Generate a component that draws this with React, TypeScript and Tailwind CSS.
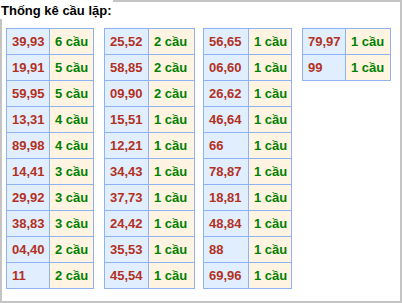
import React from "react";

type Row = [string, string];

const tables: { rows: Row[]; w1: string; w2: string; ml: string }[] = [
  {
    rows: [
      ["39,93", "6 cầu"],
      ["19,91", "5 cầu"],
      ["59,95", "5 cầu"],
      ["13,31", "4 cầu"],
      ["89,98", "4 cầu"],
      ["14,41", "3 cầu"],
      ["29,92", "3 cầu"],
      ["38,83", "3 cầu"],
      ["04,40", "2 cầu"],
      ["11", "2 cầu"],
    ],
    w1: "w-[43px]",
    w2: "w-[44px]",
    ml: "ml-0",
  },
  {
    rows: [
      ["25,52", "2 cầu"],
      ["58,85", "2 cầu"],
      ["09,90", "2 cầu"],
      ["15,51", "1 cầu"],
      ["12,21", "1 cầu"],
      ["34,43", "1 cầu"],
      ["37,73", "1 cầu"],
      ["24,42", "1 cầu"],
      ["35,53", "1 cầu"],
      ["45,54", "1 cầu"],
    ],
    w1: "w-[44px]",
    w2: "w-[46px]",
    ml: "ml-[10px]",
  },
  {
    rows: [
      ["56,65", "1 cầu"],
      ["06,60", "1 cầu"],
      ["26,62", "1 cầu"],
      ["46,64", "1 cầu"],
      ["66", "1 cầu"],
      ["78,87", "1 cầu"],
      ["18,81", "1 cầu"],
      ["48,84", "1 cầu"],
      ["88", "1 cầu"],
      ["69,96", "1 cầu"],
    ],
    w1: "w-[45px]",
    w2: "w-[43px]",
    ml: "ml-[8px]",
  },
  {
    rows: [
      ["79,97", "1 cầu"],
      ["99", "1 cầu"],
    ],
    w1: "w-[43px]",
    w2: "w-[45px]",
    ml: "ml-[10px]",
  },
];

export default function App() {
  return (
    <div
      className="relative w-[402px] h-[303px] border-2 border-[#c4c4c4] bg-white text-[13px] font-bold"
      style={{ fontFamily: '"Liberation Sans", Arial, sans-serif' }}
    >
      <div className="absolute -left-[2px] -top-[2px] w-[113px] h-[19px] bg-white pl-[1px] pt-[3px] leading-[15px] text-black">
        Thống kê cầu lặp:
      </div>
      <div className="flex items-start pt-[26px] pl-[4px]">
        {tables.map((t, i) => (
          <div
            key={i}
            className={`flex flex-col border-l border-t border-[#8fb2f2] ${t.ml}`}
          >
            {t.rows.map(([a, b], j) => (
              <div key={j} className="flex">
                <div
                  className={`${t.w1} h-[26px] border-r border-b border-[#8fb2f2] bg-[#e1eefe] text-[#b3311e] pl-[5px] flex items-center`}
                >
                  {a}
                </div>
                <div
                  className={`${t.w2} h-[26px] border-r border-b border-[#8fb2f2] bg-[#fff4e1] text-[#008000] pl-[5px] flex items-center`}
                >
                  {b}
                </div>
              </div>
            ))}
          </div>
        ))}
      </div>
    </div>
  );
}
